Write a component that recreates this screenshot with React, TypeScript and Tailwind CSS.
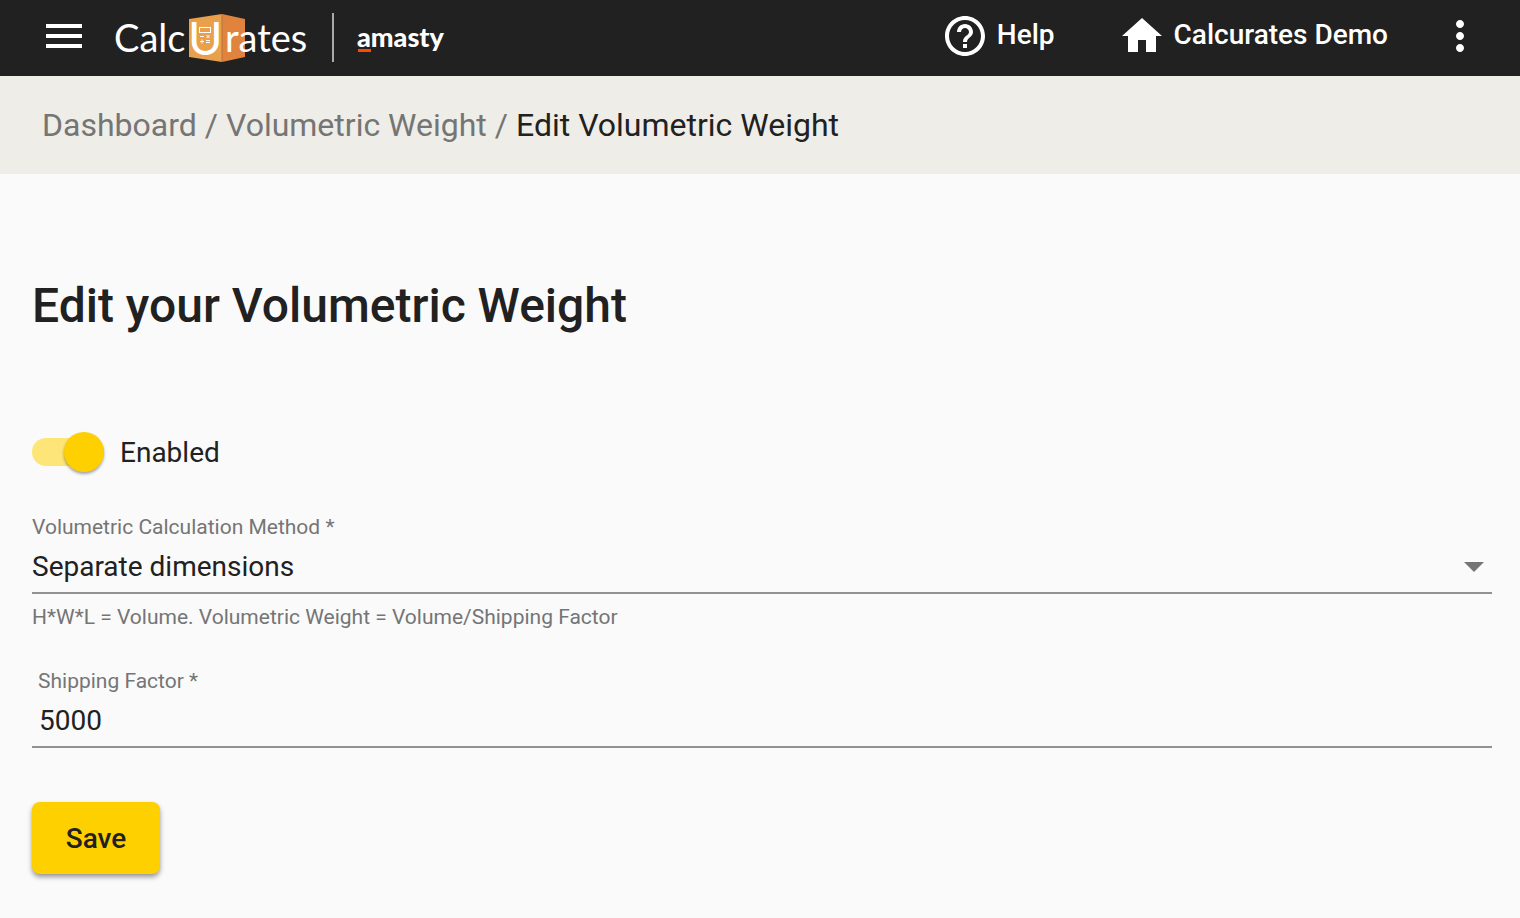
import React, { useState } from "react";
import { MdHelpOutline, MdHome, MdMenu, MdMoreVert } from "react-icons/md";

const Logo: React.FC = () => (
  <svg
    width="340"
    height="56"
    viewBox="0 0 340 56"
    role="img"
    aria-label="Calcurates by Amasty"
    className="font-['Lato',sans-serif]"
  >
    <path d="M75 9 108 4V52L75 47Z" fill="#e8a04c" />
    <path d="M108 4 131 9V47L108 52Z" fill="#e0833f" />
    <path d="M108 4V52" stroke="#b8713a" strokeWidth="1" />

    <g fill="#fff" fontSize="38">
      <text x="0" y="42">Calc</text>
      <text x="111" y="42">rates</text>
    </g>
    <text x="74" y="45" fill="#fff" fontSize="47">
      U
    </text>

    {/* calculator inside the U */}
    <g fill="none" stroke="#fff" strokeWidth="1">
      <rect x="85.5" y="17.5" width="11" height="5" />
      <path d="M86 26.5h4M92.5 25l3 3M95.5 25l-3 3M86 31.5h4M88 29.5v4M92 30.5h4M92 32.5h4" />
    </g>

    <path d="M219 3V52" stroke="#a9a9a9" strokeWidth="2" />
    <text x="243" y="37" fill="#fff" fontSize="27" fontWeight="900">amasty</text>
    <rect x="244" y="39" width="13" height="3" fill="#ff4b00" />
  </svg>
);

const Header: React.FC = () => (
  <header className="flex h-[76px] items-center bg-[#212121] pl-10 pr-9 text-white">
    <button type="button" aria-label="Menu" className="mb-1">
      <MdMenu size={48} />
    </button>
    <a href="#" className="ml-[26px]">
      <Logo />
    </a>
    <nav className="mb-1 ml-auto flex items-center text-[28px] font-medium leading-8">
      <a href="#" className="flex items-center gap-2">
        <MdHelpOutline size={48} />
        <span className="pb-0.5">Help</span>
      </a>
      <a href="#" className="ml-[63px] flex items-center gap-2">
        <MdHome size={48} />
        <span className="pb-0.5">Calcurates Demo</span>
      </a>
      <button type="button" aria-label="More" className="ml-12">
        <MdMoreVert size={48} />
      </button>
    </nav>
  </header>
);

const Breadcrumbs: React.FC = () => (
  <nav
    aria-label="Breadcrumb"
    className="flex h-[98px] items-center gap-2 bg-[#eeede7] px-[42px] text-[32px] leading-10 text-[#757575]"
  >
    <a href="#">Dashboard</a>
    <span>/</span>
    <a href="#">Volumetric Weight</a>
    <span>/</span>
    <span className="text-[#212121]">Edit Volumetric Weight</span>
  </nav>
);

const App: React.FC = () => {
  const [enabled, setEnabled] = useState(true);
  const [method, setMethod] = useState("separate");
  const [factor, setFactor] = useState("5000");

  return (
    <div className="min-h-screen bg-[#fafafa] font-['Roboto',sans-serif] text-[#212121]">
      <Header />
      <Breadcrumbs />

      <main className="pb-11 pl-8 pr-7 pt-[104px]">
        <h1 className="text-[48px] font-medium leading-[56px]">Edit your Volumetric Weight</h1>

        <form onSubmit={(e) => e.preventDefault()} className="mt-[98px] flex flex-col items-stretch">
          <label className="flex h-10 cursor-pointer items-center gap-4 self-start text-[28px] leading-8">
            <input
              type="checkbox"
              role="switch"
              checked={enabled}
              onChange={(e) => setEnabled(e.target.checked)}
              className="sr-only"
            />
            <span
              className={
                enabled
                  ? "flex h-7 w-[72px] items-center justify-end rounded-full bg-[#fde577]"
                  : "flex h-7 w-[72px] items-center justify-start rounded-full bg-[#9e9e9e]"
              }
            >
              <span className="size-10 rounded-full bg-[#ffd000] shadow-[0_2px_3px_rgba(0,0,0,0.35)]" />
            </span>
            <span className="pt-0.5">Enabled</span>
          </label>

          <label htmlFor="method" className="mt-[43px] text-[21px] leading-6 text-[#757575]">
            Volumetric Calculation Method *
          </label>
          <div className="relative border-b-2 border-[#919191]">
            <select
              id="method"
              value={method}
              onChange={(e) => setMethod(e.target.value)}
              className="h-[53px] w-full appearance-none bg-transparent pt-0.5 text-[28px] leading-8 outline-none"
            >
              <option value="separate">Separate dimensions</option>
              <option value="volume">Volume</option>
            </select>
            <svg
              width="20"
              height="10"
              viewBox="0 0 20 10"
              className="pointer-events-none absolute right-2 top-[23px]"
            >
              <path d="M0 0h20L10 10z" fill="#757575" />
            </svg>
          </div>
          <p className="mt-[11px] text-[21px] leading-6 text-[#757575]">
            H*W*L = Volume. Volumetric Weight = Volume/Shipping Factor
          </p>

          <label htmlFor="factor" className="mt-10 pl-[6px] text-[21px] leading-6 text-[#757575]">
            Shipping Factor *
          </label>
          <input
            id="factor"
            type="text"
            value={factor}
            onChange={(e) => setFactor(e.target.value)}
            className="h-[55px] border-b-2 border-[#919191] bg-transparent pl-[7px] pt-0.5 text-[28px] leading-8 outline-none"
          />

          <button
            type="submit"
            className="mt-[54px] h-[72px] w-32 self-start rounded-lg bg-[#ffd000] pt-0.5 text-[28px] font-medium shadow-[0_3px_5px_rgba(0,0,0,0.4)]"
          >
            Save
          </button>
        </form>
      </main>
    </div>
  );
};

export default App;
